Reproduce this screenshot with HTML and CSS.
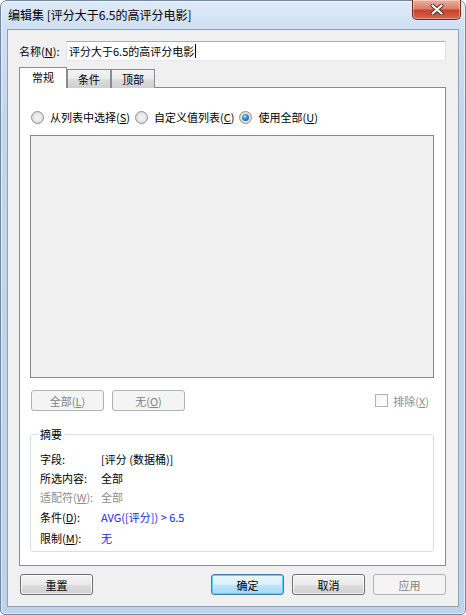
FILE: index.html
```html
<!DOCTYPE html>
<html lang="zh-CN">
<head>
    <meta charset="UTF-8">
    <meta name="viewport" content="width=device-width, initial-scale=1.0">
    <title>编辑集</title>
    <link rel="stylesheet" href="styles.css">
</head>
<body>
    <div class="window">
        <div class="titlebar">
            <span class="title">编辑集 [评分大于6.5的高评分电影]</span>
            <button class="close-btn" title="关闭">
                <svg width="14" height="11" viewBox="0 0 14 11">
                    <path d="M2.5 1.5 L11.5 9.5 M11.5 1.5 L2.5 9.5" stroke="#4a2a24" stroke-width="4" stroke-linecap="round"/>
                    <path d="M2.5 1.5 L11.5 9.5 M11.5 1.5 L2.5 9.5" stroke="#ffffff" stroke-width="2.2" stroke-linecap="round"/>
                </svg>
            </button>
        </div>
        <div class="client">
            <div class="name-row">
                <span class="name-label">名称(<u>N</u>):</span>
                <div class="textbox">评分大于6.5的高评分电影<span class="caret"></span></div>
            </div>
            <div class="tabs">
                <div class="tab active">常规</div>
                <div class="tab">条件</div>
                <div class="tab">顶部</div>
            </div>
            <div class="panel">
                <div class="radios">
                    <label class="radio-item"><span class="radio"></span>从列表中选择(<u>S</u>)</label>
                    <label class="radio-item"><span class="radio"></span>自定义值列表(<u>C</u>)</label>
                    <label class="radio-item"><span class="radio checked"></span>使用全部(<u>U</u>)</label>
                </div>
                <div class="listbox"></div>
                <div class="list-actions">
                    <button class="btn" disabled>全部(<u>L</u>)</button>
                    <button class="btn" disabled>无(<u>O</u>)</button>
                    <label class="check-item"><span class="checkbox"></span>排除(<u>X</u>)</label>
                </div>
                <div class="summary">
                    <span class="summary-legend">摘要</span>
                    <div class="summary-grid">
                        <span>字段:</span><span>[评分 (数据桶)]</span>
                        <span>所选内容:</span><span>全部</span>
                        <span class="muted">适配符(<u>W</u>):</span><span class="muted">全部</span>
                        <span>条件(<u>D</u>):</span><span class="blue">AVG([评分]) &gt; 6.5</span>
                        <span>限制(<u>M</u>):</span><span class="blue">无</span>
                    </div>
                </div>
            </div>
            <div class="footer">
                <button class="btn">重置</button>
                <div class="footer-right">
                    <button class="btn default">确定</button>
                    <button class="btn">取消</button>
                    <button class="btn" disabled>应用</button>
                </div>
            </div>
        </div>
    </div>
</body>
</html>
```

FILE: styles.css
```css
body {
    margin: 0;
    font-family: "Noto Sans CJK SC", "Noto Sans", sans-serif;
    font-size: 11px;
    color: #000;
    background: #fff;
}
u {
    text-decoration: underline;
    text-underline-offset: 1px;
}
.window {
    width: 466px;
    height: 615px;
    box-sizing: border-box;
    border: 1px solid #6d87a6;
    border-radius: 7px 7px 5px 5px;
    background: linear-gradient(to bottom, #dfebf7 0, #cfe0f2 28px, #c1d7ee 120px, #bcd3ec 100%);
    box-shadow: inset 0 0 0 1px rgba(255, 255, 255, 0.55);
    display: flex;
    flex-direction: column;
}
.titlebar {
    height: 28px;
    display: flex;
    align-items: flex-start;
    padding-left: 7px;
}
.title {
    font-size: 12px;
    line-height: 14px;
    margin-top: 7px;
    flex: 1;
    color: #000;
}
.close-btn {
    width: 49px;
    height: 20px;
    margin-top: -1px;
    margin-right: 4px;
    box-sizing: border-box;
    padding: 0;
    border: 1px solid #6e2c22;
    border-top: none;
    border-radius: 0 0 5px 5px;
    background: linear-gradient(to bottom, #eab1a2 0, #dd7f68 45%, #c8432a 55%, #d2674c 100%);
    box-shadow: inset 0 0 0 1px rgba(255, 255, 255, 0.35);
    display: flex;
    align-items: center;
    justify-content: center;
}
.client {
    margin: 0 6px;
    height: 578px;
    box-sizing: border-box;
    border: 1px solid #8ea3bb;
    background: #f0f0f0;
    padding: 11px 12px 11px 11px;
}
.name-row {
    display: flex;
    height: 20px;
    align-items: center;
}
.name-label {
    width: 47px;
}
.textbox {
    flex: 1;
    height: 20px;
    box-sizing: border-box;
    border: 1px solid #abadb3;
    border-left-color: #e2e3ea;
    border-right-color: #dbdfe6;
    border-bottom-color: #e3e9ef;
    background: #fff;
    padding-left: 2px;
    display: flex;
    align-items: center;
}
.caret {
    width: 1px;
    height: 14px;
    background: #000;
    margin-left: 1px;
}
.tabs {
    display: flex;
    margin-top: 6px;
    height: 21px;
    margin-bottom: -1px;
    position: relative;
    z-index: 1;
    align-items: flex-end;
}
.tab {
    width: 44px;
    height: 19px;
    box-sizing: border-box;
    border: 1px solid #898c95;
    border-bottom: none;
    background: linear-gradient(to bottom, #f3f3f3 0, #ebebeb 50%, #dddddd 51%, #cfcfcf 100%);
    display: flex;
    align-items: center;
    justify-content: center;
    margin-right: 0;
}
.tab + .tab {
    margin-left: 0;
}
.tab.active {
    width: 48px;
    height: 21px;
    background: #fff;
    padding-bottom: 2px;
}
.panel {
    height: 479px;
    box-sizing: border-box;
    border: 1px solid #898c95;
    background: #fff;
    padding: 21px 11px 0 10px;
}
.radios {
    display: flex;
    height: 16px;
    align-items: center;
    padding-left: 1px;
}
.radio-item {
    display: flex;
    align-items: center;
    margin-right: 5px;
}
.radio {
    width: 13px;
    height: 13px;
    box-sizing: border-box;
    border-radius: 50%;
    border: 1px solid #8f8f8f;
    background: radial-gradient(circle at 50% 50%, #f4f4f4 0, #e8e8e8 45%, #cfcfcf 100%);
    margin-right: 6px;
    display: flex;
    align-items: center;
    justify-content: center;
}
.radio.checked::after {
    content: "";
    width: 7px;
    height: 7px;
    border-radius: 50%;
    background: radial-gradient(circle at 40% 35%, #a6e0fb 0, #2c87c9 45%, #0d4c8d 100%);
}
.listbox {
    margin-top: 10px;
    height: 243px;
    box-sizing: border-box;
    border: 1px solid #828790;
    background: #f0f0f0;
}
.list-actions {
    display: flex;
    align-items: center;
    gap: 8px;
    margin-top: 12px;
    padding-left: 1px;
    height: 21px;
}
.check-item {
    margin-left: auto;
    margin-right: 5px;
    display: flex;
    align-items: center;
    color: #8d8d8d;
}
.checkbox {
    width: 13px;
    height: 13px;
    box-sizing: border-box;
    border: 1px solid #b1b1b1;
    background: linear-gradient(135deg, #f4f4f4, #ffffff);
    margin-right: 5px;
}
.btn {
    width: 73px;
    height: 21px;
    box-sizing: border-box;
    padding: 0;
    border: 1px solid #707070;
    border-radius: 3px;
    background: linear-gradient(to bottom, #f2f2f2 0, #ebebeb 50%, #dddddd 50%, #cfcfcf 100%);
    box-shadow: inset 0 0 0 1px rgba(255, 255, 255, 0.75);
    font: inherit;
    color: #000;
}
.btn.default {
    border-color: #3c7fb1;
    background: linear-gradient(to bottom, #eaf6fd 0, #d9f0fc 50%, #bee6fd 50%, #a7d9f5 100%);
    box-shadow: inset 0 0 0 1px #5ed0f7;
}
.btn:disabled {
    border-color: #adb2b5;
    background: #f4f4f4;
    color: #838383;
    box-shadow: none;
}
.summary {
    position: relative;
    margin-top: 23px;
    height: 118px;
    box-sizing: border-box;
    border: 1px solid #d5dfe5;
    border-radius: 3px;
    padding: 15px 0 3px 9px;
}
.summary-legend {
    position: absolute;
    top: -8px;
    left: 7px;
    padding: 0 2px;
    background: #fff;
    line-height: 14px;
}
.summary-grid {
    display: grid;
    grid-template-columns: 61px 1fr;
    grid-template-rows: 18px 19px 20px 20px 21px;
    align-items: center;
}
.muted {
    color: #8d8d8d;
}
.blue {
    color: #1c1cf0;
}
.footer {
    display: flex;
    margin-top: 8px;
    padding-left: 1px;
}
.footer-right {
    margin-left: auto;
    display: flex;
    gap: 8px;
}
```
